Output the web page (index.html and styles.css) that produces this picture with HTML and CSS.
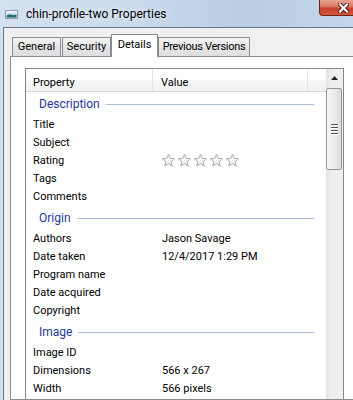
FILE: index.html
```html
<!DOCTYPE html>
<html>
<head>
    <link rel="stylesheet" href="styles.css">
</head>
<body>
    <div class="window">
        <div class="titlebar">
            <svg class="app-icon" width="13" height="9" viewBox="0 0 13 9">
                <defs>
                    <linearGradient id="sky" x1="0" y1="0" x2="0" y2="1">
                        <stop offset="0" stop-color="#e8f4fb"/>
                        <stop offset="1" stop-color="#8cc3e6"/>
                    </linearGradient>
                </defs>
                <rect x="0.5" y="0.5" width="12" height="8" fill="#fff" stroke="#8c9cb0"/>
                <rect x="1.5" y="1.5" width="10" height="6" fill="url(#sky)"/>
                <path d="M1.5 7.5 L1.5 5.5 L5 4.3 L8 5.2 L11.5 4.6 L11.5 7.5 Z" fill="#2f6a6a"/>
            </svg>
            <span class="title">chin-profile-two Properties</span>
            <div class="close-btn">
                <svg width="11" height="10" viewBox="0 0 11 10">
                    <path d="M2 1.5 L9 8.5 M9 1.5 L2 8.5" stroke="#4a140c" stroke-width="4" stroke-linecap="square"/>
                    <path d="M2 1.5 L9 8.5 M9 1.5 L2 8.5" stroke="#fff" stroke-width="2.2" stroke-linecap="square"/>
                </svg>
            </div>
        </div>
        <div class="body">
            <div class="tabs">
                <div class="tab tab-general">General</div>
                <div class="tab tab-security">Security</div>
                <div class="tab tab-details active">Details</div>
                <div class="tab tab-versions">Previous Versions</div>
            </div>
            <div class="panel">
                <div class="listview">
                    <div class="list">
                        <div class="lv-header">
                            <div class="hcol hcol-prop">Property</div>
                            <div class="hcol hcol-val">Value</div>
                            <div class="hcol hcol-rest"></div>
                        </div>

                        <div class="group">Description</div>
                        <div class="row"><div class="prop">Title</div><div class="val"></div></div>
                        <div class="row"><div class="prop">Subject</div><div class="val"></div></div>
                        <div class="row">
                            <div class="prop">Rating</div>
                            <div class="val">
                                <svg class="stars" width="80" height="13" viewBox="0 0 80 13">
                                    <defs>
                                        <linearGradient id="starfill" x1="0" y1="0" x2="0" y2="1">
                                            <stop offset="0" stop-color="#ffffff"/>
                                            <stop offset="1" stop-color="#ececec"/>
                                        </linearGradient>
                                        <polygon id="star" points="6.5,0.5 8.2,4.45 12.49,4.85 9.26,7.7 10.2,11.9 6.5,9.7 2.8,11.9 3.74,7.7 0.51,4.85 4.8,4.45" fill="url(#starfill)" stroke="#a9a9a9" stroke-width="1" stroke-linejoin="round"/>
                                    </defs>
                                    <use href="#star" x="0"/>
                                    <use href="#star" x="16"/>
                                    <use href="#star" x="32"/>
                                    <use href="#star" x="48"/>
                                    <use href="#star" x="64"/>
                                </svg>
                            </div>
                        </div>
                        <div class="row"><div class="prop">Tags</div><div class="val"></div></div>
                        <div class="row"><div class="prop">Comments</div><div class="val"></div></div>

                        <div class="group">Origin</div>
                        <div class="row"><div class="prop">Authors</div><div class="val">Jason Savage</div></div>
                        <div class="row"><div class="prop">Date taken</div><div class="val">12/4/2017 1:29 PM</div></div>
                        <div class="row"><div class="prop">Program name</div><div class="val"></div></div>
                        <div class="row"><div class="prop">Date acquired</div><div class="val"></div></div>
                        <div class="row"><div class="prop">Copyright</div><div class="val"></div></div>

                        <div class="group">Image</div>
                        <div class="row"><div class="prop">Image ID</div><div class="val"></div></div>
                        <div class="row"><div class="prop">Dimensions</div><div class="val">566 x 267</div></div>
                        <div class="row"><div class="prop">Width</div><div class="val">566 pixels</div></div>
                    </div>
                    <div class="scrollbar">
                        <div class="sb-btn">
                            <svg width="7" height="4" viewBox="0 0 7 4"><path d="M0 4 L3.5 0 L7 4 Z" fill="#222"/></svg>
                        </div>
                        <div class="sb-thumb">
                            <div class="grip"></div>
                            <div class="grip"></div>
                            <div class="grip"></div>
                            <div class="grip"></div>
                        </div>
                    </div>
                </div>
            </div>
        </div>
    </div>
</body>
</html>
```
FILE: styles.css
```css
body {
    margin: 0;
    font-family: Roboto, "Liberation Sans", sans-serif;
    font-size: 11px;
    color: rgb(0, 0, 0);
}
.window {
    width: 353px;
    height: 400px;
    overflow: hidden;
    display: flex;
    flex-direction: column;
    background: linear-gradient(to right, #c9d9ea 0px, #dce8f4 2px, #bfd2e6 4px, #cddcec 40%, #bccfe4 75%, #c6d7ea 100%);
}
.titlebar {
    height: 27px;
    flex-shrink: 0;
    display: flex;
    align-items: center;
    padding-left: 5px;
    background: linear-gradient(to right, #d3e1f0 0%, #cadbed 35%, #b9cde3 70%, #c4d6ea 100%);
}
.app-icon {
    margin-right: 8px;
    margin-top: 1px;
}
.title {
    font-size: 12px;
    color: #000;
    text-shadow: 0 0 6px rgba(255, 255, 255, 0.9);
}
.close-btn {
    margin-left: auto;
    align-self: flex-start;
    width: 34px;
    height: 16px;
    box-sizing: border-box;
    border: 1px solid #6e2418;
    border-top: none;
    border-right: none;
    border-bottom-left-radius: 4px;
    background: linear-gradient(#eaa595 0%, #d9775f 45%, #c8402a 55%, #d0573d 100%);
    padding: 3px 0 0 18px;
}
.close-btn svg {
    display: block;
}
.body {
    flex: 1;
    min-height: 0;
    margin-left: 3px;
    border-left: 1px solid #67788c;
    border-top: 1px solid #67788c;
    background: #f0f0f0;
    padding: 6px 0 0 6px;
    display: flex;
    flex-direction: column;
}
.tabs {
    display: flex;
    align-items: flex-end;
    height: 22px;
    flex-shrink: 0;
    padding-left: 2px;
    position: relative;
    z-index: 1;
}
.tab {
    box-sizing: border-box;
    height: 19px;
    border: 1px solid #898c95;
    border-bottom: none;
    background: linear-gradient(#f4f4f4, #e6e6e6 50%, #dedede 100%);
    line-height: 18px;
    text-align: center;
    white-space: nowrap;
}
.tab-general {
    width: 49px;
    margin-right: 1px;
}
.tab-security {
    width: 49px;
}
.tab-details {
    width: 47px;
}
.tab-versions {
    width: 92px;
    letter-spacing: -0.3px;
}
.tab.active {
    height: 23px;
    margin-bottom: -1px;
    padding-top: 1px;
    background: #fff;
}
.panel {
    flex: 1;
    min-height: 0;
    background: #fff;
    border: 1px solid #898c95;
    margin-right: -20px;
    padding: 11px 0 0 14px;
    overflow: hidden;
}
.listview {
    width: 319px;
    height: 400px;
    box-sizing: border-box;
    border: 1px solid #828790;
    display: flex;
    background: #fff;
}
.list {
    flex: 1;
    min-width: 0;
}
.lv-header {
    display: flex;
    height: 23px;
    box-sizing: border-box;
    border-bottom: 1px solid #d5d8de;
    background: linear-gradient(#ffffff 0%, #ffffff 45%, #f5f6f8 55%, #f1f2f4 100%);
}
.hcol {
    box-sizing: border-box;
    padding-top: 6px;
    line-height: 16px;
}
.hcol-prop {
    width: 127px;
    padding-left: 7px;
    border-right: 1px solid #e2e4e8;
}
.hcol-val {
    width: 155px;
    padding-left: 8px;
    border-right: 1px solid #e2e4e8;
}
.hcol-rest {
    flex: 1;
}
.group {
    display: flex;
    align-items: center;
    height: 24px;
    padding-left: 13px;
    font-size: 12px;
    color: #23389a;
}
.group::after {
    content: "";
    flex: 1;
    height: 1px;
    background: #aebbd6;
    margin: 0 12px 0 6px;
}
.row {
    display: flex;
    height: 18px;
    line-height: 18px;
}
.prop {
    width: 127px;
    box-sizing: border-box;
    padding-left: 7px;
}
.val {
    padding-left: 9px;
    display: flex;
    align-items: center;
}
.stars {
    display: block;
    margin-top: -1px;
}
.scrollbar {
    width: 17px;
    flex-shrink: 0;
    display: flex;
    flex-direction: column;
    background: linear-gradient(to right, #e3e3e3, #eeeeee 30%, #f0f0f0 100%);
}
.sb-btn {
    height: 17px;
    display: flex;
    align-items: center;
    justify-content: center;
}
.sb-btn svg {
    display: block;
}
.sb-thumb {
    margin-top: 2px;
    width: 16px;
    height: 82px;
    box-sizing: border-box;
    border: 1px solid #979797;
    border-radius: 2px;
    background: linear-gradient(to right, #f5f5f5, #ececec 50%, #dcdcdc 100%);
    display: flex;
    flex-direction: column;
    align-items: center;
    justify-content: center;
    gap: 2px;
}
.grip {
    width: 7px;
    height: 1px;
    background: #555;
    box-shadow: 0 1px 0 #fff;
}
```
